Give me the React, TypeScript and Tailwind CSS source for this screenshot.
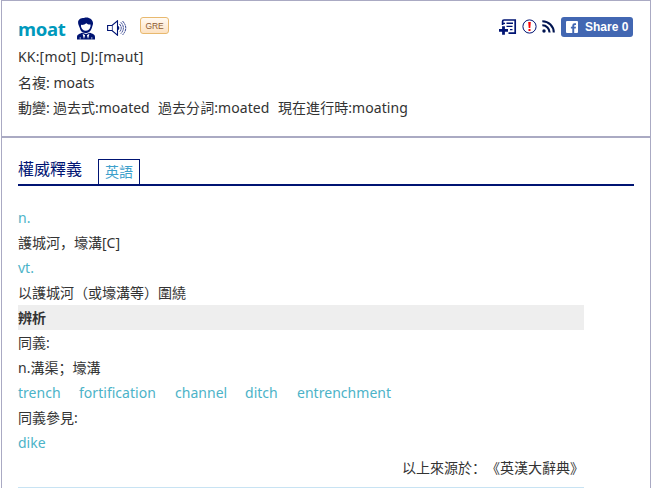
import React from "react";

const synonyms = [
  { word: "trench", box: "w-[61px]" },
  { word: "fortification", box: "w-[96px]" },
  { word: "channel", box: "w-[70px]" },
  { word: "ditch", box: "w-[52px]" },
  { word: "entrenchment", box: "w-[96px]" },
];

function PersonIcon() {
  return (
    <svg width="20" height="24" viewBox="0 0 20 24" fill="#001473">
      <path d="M2.6 8C0.8 3 4 1 8 1C12-0.5 17.4 2 17 7L15.8 11C14.5 14.8 12 16 9.7 16C6.5 16 4.3 14 3.8 11Z" />
      <path d="M5 7.8C7 8.2 9 7.2 10.5 6.2C11.5 7.4 13 7.7 14.5 7.4V9.6C13.7 12.6 12 13.8 9.7 13.8C7.2 13.8 5.7 12.3 5 9.6Z" fill="#fff" />
      <path d="M1 22.5V20C1 17 4 16.7 6.2 15.7L10 17L13.8 15.7C16.5 16.7 19 17 19 20V22.5Z" />
      <path d="M6.6 16.8L9.1 18.3L8.1 21.5H7.8ZM13.4 16.8L10.9 18.3L11.9 21.5H12.2Z" fill="#fff" />
      <path d="M4.2 20V22.5M15.8 20V22.5" stroke="#fff" strokeWidth="0.6" />
    </svg>
  );
}

function SpeakerIcon() {
  return (
    <svg width="20" height="16" viewBox="0 0 20 16" fill="none" stroke="#001473">
      <path d="M0.6 5.5H5L10.5 0.8V15.2L5 10.5H0.6Z" strokeWidth="1.1" />
      <path d="M5.4 5.5V10.5" strokeWidth="0.7" />
      <path d="M11 6.2Q13 8 11 9.8Z" fill="#001473" strokeWidth="0.8" />
      <path d="M12.5 4Q16 8 12.5 12M13.8 2.3Q19 8 13.8 13.7M15.5 1Q22 8 15.5 15" strokeWidth="0.8" strokeDasharray="2.4 0.5" />
    </svg>
  );
}

function AddNoteIcon() {
  return (
    <svg width="18" height="17" viewBox="0 0 18 17" fill="none" stroke="#001473">
      <path d="M3.6 7V3.4Q3.6 2 5 2H16.2V15.2H9.5" strokeWidth="1.7" />
      <path d="M3 5.4H6" strokeWidth="1.4" />
      <path d="M7.5 5.2H14M7.5 8.4H13.5M11 11.6H13.5" strokeWidth="1.4" />
      <path d="M0 12.3H9M4.5 8.3V16.8" strokeWidth="2.8" />
    </svg>
  );
}

function AlertIcon() {
  return (
    <svg width="15" height="15" viewBox="0 0 15 15" fill="none">
      <circle cx="7.5" cy="7.5" r="6.6" stroke="#001473" strokeWidth="1" />
      <path d="M6.2 3H8.8L8.3 9H6.7Z" fill="#f00" />
      <rect x="6.5" y="10" width="2" height="2" fill="#f00" />
    </svg>
  );
}

function FeedIcon() {
  return (
    <svg width="13" height="13" viewBox="0 0 13 13" fill="none" stroke="#001450" strokeWidth="2.1">
      <circle cx="2" cy="11" r="1.7" fill="#001450" stroke="none" />
      <path d="M0.3 5.3A7.2 7.2 0 0 1 7.6 12.6M0.3 1.2A11.4 11.4 0 0 1 11.8 12.6" />
    </svg>
  );
}

function FacebookIcon() {
  return (
    <svg width="12" height="12" viewBox="0 0 12 12">
      <rect width="12" height="12" rx="1" fill="#fff" />
      <path d="M6.3 12V7.6H4.9V5.8H6.3V4.5Q6.3 2.2 8.5 2.2H10V4H9Q8.2 4 8.2 4.8V5.8H10L9.7 7.6H8.2V12Z" fill="#4267b2" />
    </svg>
  );
}

export default function App() {
  return (
    <div className="h-[488px] w-[651px] overflow-hidden bg-white pl-px font-['Noto_Sans','Noto_Sans_CJK_SC',sans-serif] text-[14px] leading-[25px] text-[#333] [text-spacing-trim:space-all]">
      <section className="h-[138px] border border-b-2 border-[#aaaac3] px-4">
        <header className="flex h-[43px] items-start">
          <h1 className="mt-[15px] w-[57px] text-[18.5px] font-bold leading-[26px] tracking-[-0.3px] text-[#0099bc]">moat</h1>
          <span className="ml-px mt-[16px]"><PersonIcon /></span>
          <span className="ml-[11px] mt-[19px]"><SpeakerIcon /></span>
          <span className="ml-[13px] mt-[16px] h-[17px] w-[29px] rounded-[3px] border border-[#e8b96f] bg-gradient-to-b from-[#fffaf4] to-[#fde2c2] text-center font-['Liberation_Sans',sans-serif] text-[8.5px] leading-[16px] tracking-[-0.1px] text-[#8c5a32]">GRE</span>
          <div className="ml-auto mr-px flex items-start">
            <span className="mt-[17px]"><AddNoteIcon /></span>
            <span className="ml-[5px] mt-[18px]"><AlertIcon /></span>
            <span className="ml-[5px] mt-[19px]"><FeedIcon /></span>
            <a className="ml-[6px] mt-[16px] flex h-5 w-[72px] items-center rounded-[3px] bg-[#4267b2] pl-[5px] font-['Liberation_Sans',sans-serif] text-[12px] font-bold leading-5 text-white">
              <FacebookIcon />
              <span className="ml-[7px] whitespace-nowrap">Share 0</span>
            </a>
          </div>
        </header>
        <p className="h-[26px] tracking-[0.18px]">KK:[mot] DJ:[məut]</p>
        <p className="h-[25px]">名複: moats</p>
        <p className="flex h-[25px] whitespace-nowrap">
          <span className="w-[35px]">動變:</span>
          <span className="w-[105px]">過去式:moated</span>
          <span className="w-[120px] tracking-[0.06px]">過去分詞:moated</span>
          <span className="tracking-[0.06px]">現在進行時:moating</span>
        </p>
      </section>
      <section className="h-[350px] border-x border-[#aaaac3] px-4">
        <div className="flex h-[48px] items-end border-b-2 border-[#001473]">
          <h2 className="mb-[2px] w-[80px] text-[16px] leading-[25px] text-[#001473]">權威釋義</h2>
          <span className="h-[25px] w-[42px] border border-b-0 border-[#001473] text-center leading-[24px] text-[#3da0cb]">英語</span>
        </div>
        <div className="mt-[19px] w-[566px]">
          <p className="text-[#4cb3c8]">n.</p>
          <p>護城河，壕溝[C]</p>
          <p className="text-[#4cb3c8]">vt.</p>
          <p>以護城河（或壕溝等）圍繞</p>
          <p className="bg-[#eee] font-bold">辨析</p>
          <p>同義:</p>
          <p>n.溝渠；壕溝</p>
          <p className="flex tracking-[0.03px] text-[#4cb3c8]">
            {synonyms.map((s) => (
              <a key={s.word} className={s.box}>{s.word}</a>
            ))}
          </p>
          <p>同義參見:</p>
          <p className="text-[#4cb3c8]">dike</p>
          <p className="text-right">以上來源於：《英漢大辭典》</p>
          <div className="mt-[7px] border-t border-[#c8e3f3]" />
        </div>
      </section>
    </div>
  );
}
